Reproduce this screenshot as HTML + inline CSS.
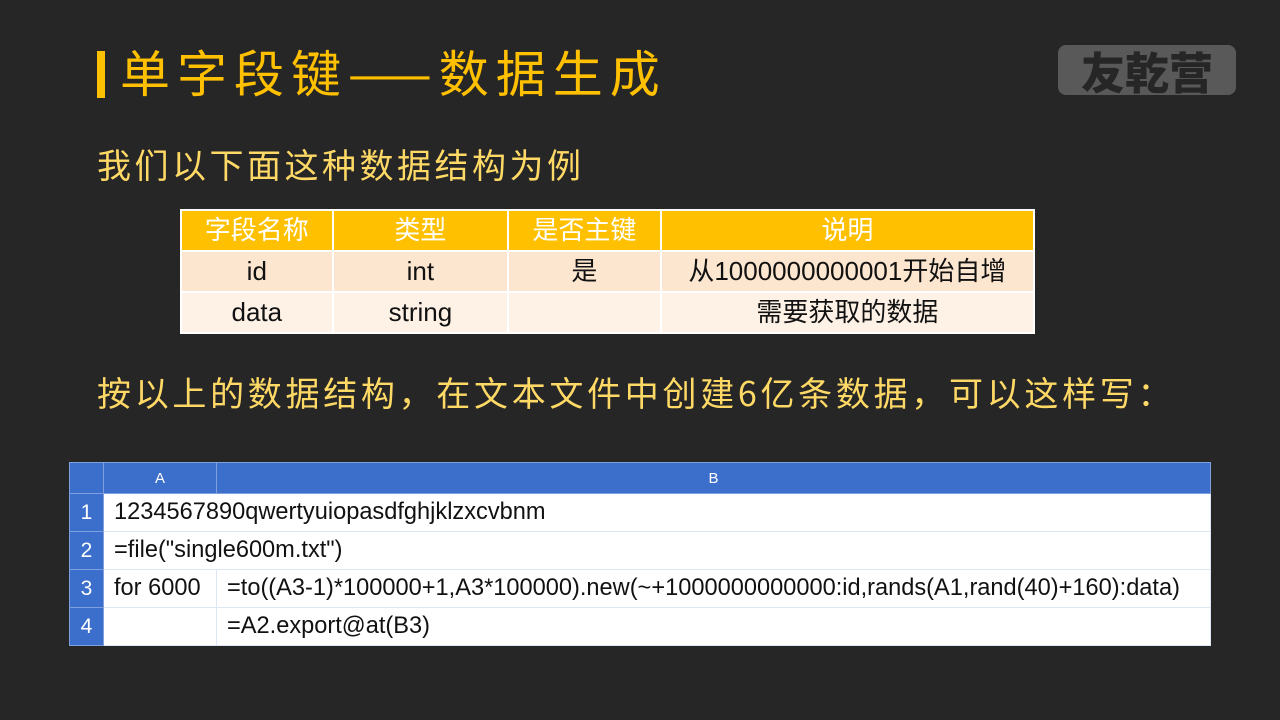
<!DOCTYPE html>
<html><head><meta charset="utf-8"><style>
body{margin:0;width:1280px;height:720px;background:#262626;position:relative;overflow:hidden;font-family:"Liberation Sans","Noto Sans CJK SC",sans-serif}
.t{position:absolute;white-space:nowrap}
.bar{position:absolute;left:97px;top:51px;width:8px;height:47px;background:#FFC000}
.title{left:120px;top:41px;font-size:50px;line-height:60px;color:#FFC000;letter-spacing:7px;font-family:"Noto Sans CJK SC",sans-serif}
.sub{font-size:34px;line-height:40px;color:#FFD966;letter-spacing:3.5px;font-family:"Noto Sans CJK SC",sans-serif}
.logo{position:absolute;left:1058px;top:45px;width:178px;height:50px;background:#595959;border-radius:8px;color:#262626;font-weight:900;font-size:44px;line-height:50px;text-align:center;letter-spacing:0px;font-family:"Noto Sans CJK SC",sans-serif}
table{position:absolute;border-collapse:collapse}
.tb{left:180px;top:209px;width:855px;font-size:26px;font-family:"Liberation Sans","Noto Sans CJK SC",sans-serif}
.tb td{border:2px solid #fff;text-align:center;padding:0;height:39px;line-height:39px;color:#111}
.tb tr.h td{background:#FFC000;color:#fff}
.tb tr.r1 td{background:#FDE6CF}
.tb tr.r2 td{background:#FEF2E7}
.sp{left:69px;top:462px;width:1142px;font-size:23.6px;font-family:"Liberation Sans",sans-serif}
.sp td{border:1px solid #DCE6F5;background:#fff;height:37px;padding:0 0 0 10px;color:#111;white-space:nowrap}
.sp tr.h td{background:#3C6FCC;color:#fff;text-align:center;font-size:15px;height:30px;padding:0;border-color:#7FA0DD}
.sp td.n{background:#3C6FCC;color:#fff;text-align:center;padding:0;border-color:#7FA0DD;font-size:21px}
</style></head><body>
<div class="bar"></div>
<div class="t title">单字段键——数据生成</div>
<div class="logo">友乾营</div>
<div class="t sub" style="left:97px;top:144px">我们以下面这种数据结构为例</div>
<table class="tb">
<colgroup><col style="width:152px"><col style="width:176px"><col style="width:153px"><col style="width:374px"></colgroup>
<tr class="h"><td>字段名称</td><td>类型</td><td>是否主键</td><td>说明</td></tr>
<tr class="r1"><td>id</td><td>int</td><td>是</td><td>从1000000000001开始自增</td></tr>
<tr class="r2"><td>data</td><td>string</td><td></td><td>需要获取的数据</td></tr>
</table>
<div class="t sub" style="left:97px;top:372px;letter-spacing:3.7px">按以上的数据结构，在文本文件中创建6亿条数据，可以这样写：</div>
<table class="sp">
<colgroup><col style="width:34px"><col style="width:113px"><col></colgroup>
<tr class="h"><td></td><td>A</td><td>B</td></tr>
<tr><td class="n">1</td><td colspan="2">1234567890qwertyuiopasdfghjklzxcvbnm</td></tr>
<tr><td class="n">2</td><td colspan="2">=file("single600m.txt")</td></tr>
<tr><td class="n">3</td><td>for 6000</td><td>=to((A3-1)*100000+1,A3*100000).new(~+1000000000000:id,rands(A1,rand(40)+160):data)</td></tr>
<tr><td class="n">4</td><td></td><td>=A2.export@at(B3)</td></tr>
</table>
</body></html>
